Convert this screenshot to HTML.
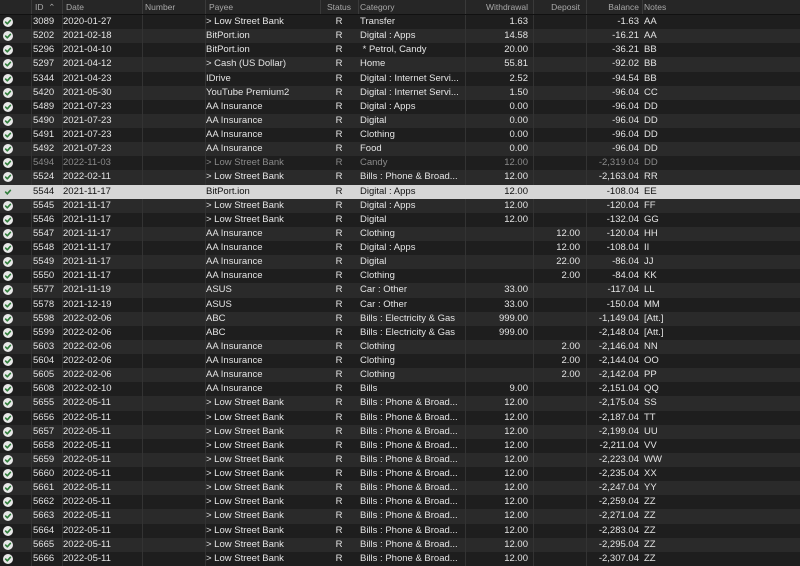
<!DOCTYPE html>
<html><head><meta charset="utf-8"><style>
*{margin:0;padding:0;box-sizing:border-box}
body{width:800px;height:566px;overflow:hidden;background:#1e1e1e;font-family:"Liberation Sans",sans-serif;font-size:9.5px;color:#e4e4e4}
.h,.r{position:relative;height:14.13px;white-space:nowrap}
.h{height:15px;background:#262626;color:#a8a8a8;font-size:8.5px;border-bottom:1px solid #111}
.r{background-image:linear-gradient(#333,#333),linear-gradient(#333,#333),linear-gradient(#333,#333),linear-gradient(#333,#333),linear-gradient(#333,#333),linear-gradient(#333,#333),linear-gradient(#333,#333);background-size:1px 100%;background-repeat:no-repeat;background-position:31px 0,62px 0,142px 0,205px 0,465px 0,533px 0,586px 0}
#t .r:nth-child(odd){background-color:#1e1e1e}
#t .r:nth-child(even){background-color:#2a2a2a}
#t .r.sel{background:#d6d6d6;color:#111}
.r.dim{color:#8a8a8a}
.r span,.h span{position:absolute;top:0;line-height:14px;overflow:hidden}
.h span{line-height:15px}
.c0{left:0;width:31px}
.c1{left:33px;width:29px}
.c2{left:63px;width:78px}
.c3{left:145px;width:60px}
.c4{left:206px;width:113px}
.c5{left:320px;width:38px;text-align:center}
.c6{left:360px;width:104px}
.c7{left:466px;width:62px;text-align:right}
.c8{left:533px;width:47px;text-align:right}
.c9{left:587px;width:52px;text-align:right}
.c10{left:644px;width:150px}
.sep{position:absolute;top:0;bottom:0;width:1px;background:#3a3a3a}
svg.ck{position:absolute;left:3px;top:2px;width:10px;height:10px;display:block}
</style></head><body>
<svg width="0" height="0" style="position:absolute"><defs><g id="k"><circle cx="5" cy="5" r="5" fill="#e8e8e8"/><path d="M2.6 5.1 L4.3 6.8 L7.4 3.3" stroke="#2f7d3a" stroke-width="1.6" fill="none" stroke-linecap="round" stroke-linejoin="round"/></g></defs></svg>
<div class="h"><span class="c1" style="left:35px">ID &nbsp;⌃</span><span class="c2" style="left:66px">Date</span><span class="c3">Number</span><span class="c4" style="left:209px">Payee</span><span class="c5">Status</span><span class="c6">Category</span><span class="c7">Withdrawal</span><span class="c8">Deposit</span><span class="c9">Balance</span><span class="c10">Notes</span>
<i class="sep" style="left:31px"></i><i class="sep" style="left:62px"></i><i class="sep" style="left:142px"></i><i class="sep" style="left:205px"></i><i class="sep" style="left:320px"></i><i class="sep" style="left:358px"></i><i class="sep" style="left:465px"></i><i class="sep" style="left:533px"></i><i class="sep" style="left:586px"></i><i class="sep" style="left:642px"></i></div>
<div id="t">
<div class="r"><svg class="ck" viewBox="0 0 10 10"><use href="#k"/></svg><span class="c1">3089</span><span class="c2">2020-01-27</span><span class="c4">&gt; Low Street Bank</span><span class="c5">R</span><span class="c6">Transfer</span><span class="c7">1.63</span><span class="c9">-1.63</span><span class="c10">AA</span></div>
<div class="r"><svg class="ck" viewBox="0 0 10 10"><use href="#k"/></svg><span class="c1">5202</span><span class="c2">2021-02-18</span><span class="c4">BitPort.ion</span><span class="c5">R</span><span class="c6">Digital : Apps</span><span class="c7">14.58</span><span class="c9">-16.21</span><span class="c10">AA</span></div>
<div class="r"><svg class="ck" viewBox="0 0 10 10"><use href="#k"/></svg><span class="c1">5296</span><span class="c2">2021-04-10</span><span class="c4">BitPort.ion</span><span class="c5">R</span><span class="c6">&nbsp;* Petrol, Candy</span><span class="c7">20.00</span><span class="c9">-36.21</span><span class="c10">BB</span></div>
<div class="r"><svg class="ck" viewBox="0 0 10 10"><use href="#k"/></svg><span class="c1">5297</span><span class="c2">2021-04-12</span><span class="c4">&gt; Cash (US Dollar)</span><span class="c5">R</span><span class="c6">Home</span><span class="c7">55.81</span><span class="c9">-92.02</span><span class="c10">BB</span></div>
<div class="r"><svg class="ck" viewBox="0 0 10 10"><use href="#k"/></svg><span class="c1">5344</span><span class="c2">2021-04-23</span><span class="c4">IDrive</span><span class="c5">R</span><span class="c6">Digital : Internet Servi...</span><span class="c7">2.52</span><span class="c9">-94.54</span><span class="c10">BB</span></div>
<div class="r"><svg class="ck" viewBox="0 0 10 10"><use href="#k"/></svg><span class="c1">5420</span><span class="c2">2021-05-30</span><span class="c4">YouTube Premium2</span><span class="c5">R</span><span class="c6">Digital : Internet Servi...</span><span class="c7">1.50</span><span class="c9">-96.04</span><span class="c10">CC</span></div>
<div class="r"><svg class="ck" viewBox="0 0 10 10"><use href="#k"/></svg><span class="c1">5489</span><span class="c2">2021-07-23</span><span class="c4">AA Insurance</span><span class="c5">R</span><span class="c6">Digital : Apps</span><span class="c7">0.00</span><span class="c9">-96.04</span><span class="c10">DD</span></div>
<div class="r"><svg class="ck" viewBox="0 0 10 10"><use href="#k"/></svg><span class="c1">5490</span><span class="c2">2021-07-23</span><span class="c4">AA Insurance</span><span class="c5">R</span><span class="c6">Digital</span><span class="c7">0.00</span><span class="c9">-96.04</span><span class="c10">DD</span></div>
<div class="r"><svg class="ck" viewBox="0 0 10 10"><use href="#k"/></svg><span class="c1">5491</span><span class="c2">2021-07-23</span><span class="c4">AA Insurance</span><span class="c5">R</span><span class="c6">Clothing</span><span class="c7">0.00</span><span class="c9">-96.04</span><span class="c10">DD</span></div>
<div class="r"><svg class="ck" viewBox="0 0 10 10"><use href="#k"/></svg><span class="c1">5492</span><span class="c2">2021-07-23</span><span class="c4">AA Insurance</span><span class="c5">R</span><span class="c6">Food</span><span class="c7">0.00</span><span class="c9">-96.04</span><span class="c10">DD</span></div>
<div class="r dim"><svg class="ck" viewBox="0 0 10 10"><use href="#k"/></svg><span class="c1">5494</span><span class="c2">2022-11-03</span><span class="c4">&gt; Low Street Bank</span><span class="c5">R</span><span class="c6">Candy</span><span class="c7">12.00</span><span class="c9">-2,319.04</span><span class="c10">DD</span></div>
<div class="r"><svg class="ck" viewBox="0 0 10 10"><use href="#k"/></svg><span class="c1">5524</span><span class="c2">2022-02-11</span><span class="c4">&gt; Low Street Bank</span><span class="c5">R</span><span class="c6">Bills : Phone &amp; Broad...</span><span class="c7">12.00</span><span class="c9">-2,163.04</span><span class="c10">RR</span></div>
<div class="r sel"><svg class="ck" viewBox="0 0 10 10"><path d="M2.6 5.1 L4.3 6.8 L7.4 3.3" stroke="#2f7d3a" stroke-width="1.6" fill="none" stroke-linecap="round"/></svg><span class="c1">5544</span><span class="c2">2021-11-17</span><span class="c4">BitPort.ion</span><span class="c5">R</span><span class="c6">Digital : Apps</span><span class="c7">12.00</span><span class="c9">-108.04</span><span class="c10">EE</span></div>
<div class="r"><svg class="ck" viewBox="0 0 10 10"><use href="#k"/></svg><span class="c1">5545</span><span class="c2">2021-11-17</span><span class="c4">&gt; Low Street Bank</span><span class="c5">R</span><span class="c6">Digital : Apps</span><span class="c7">12.00</span><span class="c9">-120.04</span><span class="c10">FF</span></div>
<div class="r"><svg class="ck" viewBox="0 0 10 10"><use href="#k"/></svg><span class="c1">5546</span><span class="c2">2021-11-17</span><span class="c4">&gt; Low Street Bank</span><span class="c5">R</span><span class="c6">Digital</span><span class="c7">12.00</span><span class="c9">-132.04</span><span class="c10">GG</span></div>
<div class="r"><svg class="ck" viewBox="0 0 10 10"><use href="#k"/></svg><span class="c1">5547</span><span class="c2">2021-11-17</span><span class="c4">AA Insurance</span><span class="c5">R</span><span class="c6">Clothing</span><span class="c8">12.00</span><span class="c9">-120.04</span><span class="c10">HH</span></div>
<div class="r"><svg class="ck" viewBox="0 0 10 10"><use href="#k"/></svg><span class="c1">5548</span><span class="c2">2021-11-17</span><span class="c4">AA Insurance</span><span class="c5">R</span><span class="c6">Digital : Apps</span><span class="c8">12.00</span><span class="c9">-108.04</span><span class="c10">II</span></div>
<div class="r"><svg class="ck" viewBox="0 0 10 10"><use href="#k"/></svg><span class="c1">5549</span><span class="c2">2021-11-17</span><span class="c4">AA Insurance</span><span class="c5">R</span><span class="c6">Digital</span><span class="c8">22.00</span><span class="c9">-86.04</span><span class="c10">JJ</span></div>
<div class="r"><svg class="ck" viewBox="0 0 10 10"><use href="#k"/></svg><span class="c1">5550</span><span class="c2">2021-11-17</span><span class="c4">AA Insurance</span><span class="c5">R</span><span class="c6">Clothing</span><span class="c8">2.00</span><span class="c9">-84.04</span><span class="c10">KK</span></div>
<div class="r"><svg class="ck" viewBox="0 0 10 10"><use href="#k"/></svg><span class="c1">5577</span><span class="c2">2021-11-19</span><span class="c4">ASUS</span><span class="c5">R</span><span class="c6">Car : Other</span><span class="c7">33.00</span><span class="c9">-117.04</span><span class="c10">LL</span></div>
<div class="r"><svg class="ck" viewBox="0 0 10 10"><use href="#k"/></svg><span class="c1">5578</span><span class="c2">2021-12-19</span><span class="c4">ASUS</span><span class="c5">R</span><span class="c6">Car : Other</span><span class="c7">33.00</span><span class="c9">-150.04</span><span class="c10">MM</span></div>
<div class="r"><svg class="ck" viewBox="0 0 10 10"><use href="#k"/></svg><span class="c1">5598</span><span class="c2">2022-02-06</span><span class="c4">ABC</span><span class="c5">R</span><span class="c6">Bills : Electricity &amp; Gas</span><span class="c7">999.00</span><span class="c9">-1,149.04</span><span class="c10">[Att.]</span></div>
<div class="r"><svg class="ck" viewBox="0 0 10 10"><use href="#k"/></svg><span class="c1">5599</span><span class="c2">2022-02-06</span><span class="c4">ABC</span><span class="c5">R</span><span class="c6">Bills : Electricity &amp; Gas</span><span class="c7">999.00</span><span class="c9">-2,148.04</span><span class="c10">[Att.]</span></div>
<div class="r"><svg class="ck" viewBox="0 0 10 10"><use href="#k"/></svg><span class="c1">5603</span><span class="c2">2022-02-06</span><span class="c4">AA Insurance</span><span class="c5">R</span><span class="c6">Clothing</span><span class="c8">2.00</span><span class="c9">-2,146.04</span><span class="c10">NN</span></div>
<div class="r"><svg class="ck" viewBox="0 0 10 10"><use href="#k"/></svg><span class="c1">5604</span><span class="c2">2022-02-06</span><span class="c4">AA Insurance</span><span class="c5">R</span><span class="c6">Clothing</span><span class="c8">2.00</span><span class="c9">-2,144.04</span><span class="c10">OO</span></div>
<div class="r"><svg class="ck" viewBox="0 0 10 10"><use href="#k"/></svg><span class="c1">5605</span><span class="c2">2022-02-06</span><span class="c4">AA Insurance</span><span class="c5">R</span><span class="c6">Clothing</span><span class="c8">2.00</span><span class="c9">-2,142.04</span><span class="c10">PP</span></div>
<div class="r"><svg class="ck" viewBox="0 0 10 10"><use href="#k"/></svg><span class="c1">5608</span><span class="c2">2022-02-10</span><span class="c4">AA Insurance</span><span class="c5">R</span><span class="c6">Bills</span><span class="c7">9.00</span><span class="c9">-2,151.04</span><span class="c10">QQ</span></div>
<div class="r"><svg class="ck" viewBox="0 0 10 10"><use href="#k"/></svg><span class="c1">5655</span><span class="c2">2022-05-11</span><span class="c4">&gt; Low Street Bank</span><span class="c5">R</span><span class="c6">Bills : Phone &amp; Broad...</span><span class="c7">12.00</span><span class="c9">-2,175.04</span><span class="c10">SS</span></div>
<div class="r"><svg class="ck" viewBox="0 0 10 10"><use href="#k"/></svg><span class="c1">5656</span><span class="c2">2022-05-11</span><span class="c4">&gt; Low Street Bank</span><span class="c5">R</span><span class="c6">Bills : Phone &amp; Broad...</span><span class="c7">12.00</span><span class="c9">-2,187.04</span><span class="c10">TT</span></div>
<div class="r"><svg class="ck" viewBox="0 0 10 10"><use href="#k"/></svg><span class="c1">5657</span><span class="c2">2022-05-11</span><span class="c4">&gt; Low Street Bank</span><span class="c5">R</span><span class="c6">Bills : Phone &amp; Broad...</span><span class="c7">12.00</span><span class="c9">-2,199.04</span><span class="c10">UU</span></div>
<div class="r"><svg class="ck" viewBox="0 0 10 10"><use href="#k"/></svg><span class="c1">5658</span><span class="c2">2022-05-11</span><span class="c4">&gt; Low Street Bank</span><span class="c5">R</span><span class="c6">Bills : Phone &amp; Broad...</span><span class="c7">12.00</span><span class="c9">-2,211.04</span><span class="c10">VV</span></div>
<div class="r"><svg class="ck" viewBox="0 0 10 10"><use href="#k"/></svg><span class="c1">5659</span><span class="c2">2022-05-11</span><span class="c4">&gt; Low Street Bank</span><span class="c5">R</span><span class="c6">Bills : Phone &amp; Broad...</span><span class="c7">12.00</span><span class="c9">-2,223.04</span><span class="c10">WW</span></div>
<div class="r"><svg class="ck" viewBox="0 0 10 10"><use href="#k"/></svg><span class="c1">5660</span><span class="c2">2022-05-11</span><span class="c4">&gt; Low Street Bank</span><span class="c5">R</span><span class="c6">Bills : Phone &amp; Broad...</span><span class="c7">12.00</span><span class="c9">-2,235.04</span><span class="c10">XX</span></div>
<div class="r"><svg class="ck" viewBox="0 0 10 10"><use href="#k"/></svg><span class="c1">5661</span><span class="c2">2022-05-11</span><span class="c4">&gt; Low Street Bank</span><span class="c5">R</span><span class="c6">Bills : Phone &amp; Broad...</span><span class="c7">12.00</span><span class="c9">-2,247.04</span><span class="c10">YY</span></div>
<div class="r"><svg class="ck" viewBox="0 0 10 10"><use href="#k"/></svg><span class="c1">5662</span><span class="c2">2022-05-11</span><span class="c4">&gt; Low Street Bank</span><span class="c5">R</span><span class="c6">Bills : Phone &amp; Broad...</span><span class="c7">12.00</span><span class="c9">-2,259.04</span><span class="c10">ZZ</span></div>
<div class="r"><svg class="ck" viewBox="0 0 10 10"><use href="#k"/></svg><span class="c1">5663</span><span class="c2">2022-05-11</span><span class="c4">&gt; Low Street Bank</span><span class="c5">R</span><span class="c6">Bills : Phone &amp; Broad...</span><span class="c7">12.00</span><span class="c9">-2,271.04</span><span class="c10">ZZ</span></div>
<div class="r"><svg class="ck" viewBox="0 0 10 10"><use href="#k"/></svg><span class="c1">5664</span><span class="c2">2022-05-11</span><span class="c4">&gt; Low Street Bank</span><span class="c5">R</span><span class="c6">Bills : Phone &amp; Broad...</span><span class="c7">12.00</span><span class="c9">-2,283.04</span><span class="c10">ZZ</span></div>
<div class="r"><svg class="ck" viewBox="0 0 10 10"><use href="#k"/></svg><span class="c1">5665</span><span class="c2">2022-05-11</span><span class="c4">&gt; Low Street Bank</span><span class="c5">R</span><span class="c6">Bills : Phone &amp; Broad...</span><span class="c7">12.00</span><span class="c9">-2,295.04</span><span class="c10">ZZ</span></div>
<div class="r"><svg class="ck" viewBox="0 0 10 10"><use href="#k"/></svg><span class="c1">5666</span><span class="c2">2022-05-11</span><span class="c4">&gt; Low Street Bank</span><span class="c5">R</span><span class="c6">Bills : Phone &amp; Broad...</span><span class="c7">12.00</span><span class="c9">-2,307.04</span><span class="c10">ZZ</span></div>
</div>
</body></html>
